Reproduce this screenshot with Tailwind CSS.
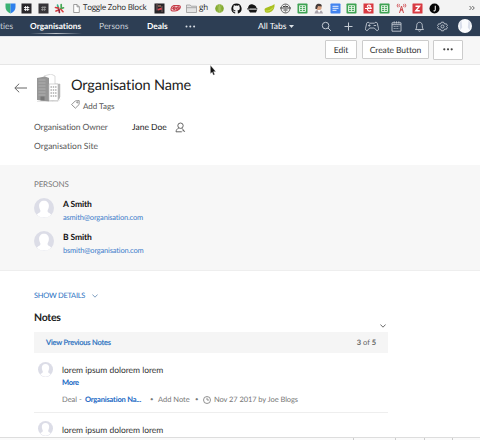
<!DOCTYPE html>
<html lang="en">
<head>
<meta charset="utf-8">
<title>Organisation</title>
<script src="https://cdn.jsdelivr.net/npm/@tailwindcss/browser@4"></script>
</head>
<body class="w-[480px] h-[440px] overflow-hidden bg-white font-['Lato',sans-serif] text-[#333] whitespace-nowrap [text-rendering:geometricPrecision] [font-variant-ligatures:none]">
<svg class="hidden">
  <symbol id="avatar" viewBox="0 0 20 20"><circle cx="10" cy="10" r="10" fill="#dcdde7"/><path d="M10 2.800c3 0 4.900 2.100 4.900 5 0 2-.8 3.700-1.300 4.800-.1 1.400.4 1.900 2.100 2.700l1.400 1.100a9.500 9.500 0 0 1-14.200 0l1.400-1.100c1.700-.8 2.200-1.300 2.100-2.700-.5-1.100-1.300-2.800-1.300-4.800 0-2.900 1.900-5 4.900-5z" fill="#fff"/></symbol>
  <symbol id="sheet" viewBox="0 0 11 11"><rect x=".5" y=".5" width="10" height="10" rx=".8" fill="#3fa354"/><path d="M2.500 2.700h6v5.800h-6zM2.500 4.600h6M2.500 6.600h6M5.500 2.700v5.800" fill="none" stroke="#e8f6e9" stroke-width=".9"/></symbol>
</svg>

<div class="h-4 bg-[#f3f3f3] flex items-center text-[#222] *:shrink-0">
  <svg class="w-[11px] h-[11px] ml-[5px]" viewBox="0 0 11 11"><path d="M.5.5h5v10C2 9 .5 7 .5 4z" fill="#3bb273"/><path d="M5.500.5h5V4c0 3-1.500 5-5 6.500z" fill="#2f80ed"/></svg>
  <svg class="w-[11px] h-[11px] ml-[5px]" viewBox="0 0 11 11"><rect x=".5" y=".5" width="10" height="10" fill="#29272b"/><path d="M4.600 3v5M6.700 3v5M3 4.500h5.300M3 6.600h5.300" stroke="#fff" stroke-width=".9"/></svg>
  <svg class="w-[11px] h-[11px] ml-[5.500px]" viewBox="0 0 11 11"><rect x=".5" y=".5" width="10" height="10" fill="#363438"/><path d="M5 3l-.7 5M7 3l-.7 5M3.200 4.500h5M3 6.600h5" stroke="#999" stroke-width=".8"/></svg>
  <svg class="w-[11px] h-[11px] ml-[5.500px]" viewBox="0 0 11 11" stroke-width="1.700" stroke-linecap="round"><path d="M3.500 2l1 3.200" stroke="#39b58a"/><path d="M7.200 1.500v3M9.500 4.800l-3 1" stroke="#45a854"/><path d="M1.500 4.500l3 .7M2 8l2.600-1" stroke="#d33a3c"/><path d="M5 6.500l.4 3" stroke="#8e2440"/><path d="M7 6.500l2 2.200" stroke="#dc4545"/></svg>
  <svg class="w-[7px] h-[9px] ml-2" viewBox="0 0 7 9" fill="#fff" stroke="#888" stroke-width=".8"><path d="M.7.5H4l2.300 2.300v5.700H.7zM4 .5v2.300h2.300"/></svg>
  <span class="ml-[3px] w-[68px] font-['Open_Sans'] text-[8px] leading-[15px] h-4 tracking-[-0.250px]">Toggle Zoho Block</span>
  <svg class="w-[11px] h-[11px] ml-[3px]" viewBox="0 0 11 11"><rect x=".5" y=".5" width="10" height="10" fill="#282528"/><path d="M3 .5v7M8 3v6" stroke="#786163"/><path d="M3.500 6l4-1.500.5 2-4 1z" fill="#df4550"/><path d="M4 2h3v2H4z" fill="#7a5f50"/></svg>
  <svg class="w-[11px] h-[11px] ml-[5px]" viewBox="0 0 11 11" fill="none" stroke="#c43c48" stroke-width="1.100"><path d="M3.800 2.500h5c2 0 2 2 .5 3.500S6.500 8 5 8H2.500C0 8 .8 3.500 3.800 2.500z" fill="#f4d5d6"/><path d="M2.500 6c1.500-3 3.300-2.500 2.500-.5S3 7 4 4.500M6 6.500c1-3 3.500-3.500 3-1.500s-3 1.500-2-1"/></svg>
  <svg class="w-[11px] h-[9px] ml-[5px]" viewBox="0 0 11 9"><path d="M.5 1h3.700l1 1.200h5.300v6.300H.5zM.5 3.700h10" fill="#e3e3e3" stroke="#999" stroke-width=".8"/></svg>
  <span class="ml-[2px] w-[15px] font-['Open_Sans'] text-[8px] leading-[15px] h-4">gh</span>
  <div class="flex gap-[5.540px]">
    <svg class="w-[11px] h-[11px]" viewBox="0 0 11 11"><circle cx="5.500" cy="5.500" r="4.300" fill="#84aa32"/><path d="M5.500 1.500v8M3.600 2c1 2 1 5 0 7M7.400 2c-1 2-1 5 0 7" stroke="#c5dc82" stroke-width=".5" fill="none"/></svg>
    <svg class="w-[11px] h-[11px]" viewBox="0 0 16 16"><path d="M8 .8a7.400 7.400 0 0 0-2.400 14.400c.4 0 .5-.2.5-.4v-1.500c-2 .4-2.600-.9-2.700-1.300-.2-.4-.5-.8-.9-1-.4-.3.2-.8.7-.3.700.8 1.300 1.800 3 1.300.1-.5.300-.9.500-1.100-1.800-.2-3.500-.9-3.500-3.700 0-.8.300-1.500.8-2 0-.2-.4-1 .1-2 0 0 .6-.2 2 .8a7 7 0 0 1 3.800 0c1.400-1 2-.8 2-.8.5 1 .2 1.800.1 2 .5.5.8 1.200.8 2 0 2.800-1.700 3.500-3.500 3.700.3.300.6.800.6 1.600v2.300c0 .2.100.4.500.4A7.400 7.400 0 0 0 8 .8z" fill="#111"/></svg>
    <svg class="w-[11px] h-[11px]" viewBox="0 0 11 11" fill="#151515"><path d="M1 5C1.500 1.500 4 1 5.800 1.500S9.500 3 9.500 5zM.3 5.300h10v1.200H.3zM1.500 7h8.500l-1 2.500H3z"/><path d="M3 6h6" stroke="#ddd" stroke-width=".6"/></svg>
    <svg class="w-[11px] h-[11px]" viewBox="0 0 11 11" fill="#a9bf1e"><path d="M.5 6C2 4 4 4.500 5.500 3.500S8.500 3 10.500 1c.3 3-.5 6-3 7.500S2 10 1 9z"/><path d="M1.500 8c3 .5 6-1 7.500-3.500" fill="none" stroke="#dbe96d" stroke-width=".7"/></svg>
    <svg class="w-[11px] h-[11px]" viewBox="0 0 11 11"><circle cx="5.500" cy="5.500" r="4.500" fill="#eee" stroke="#686868"/><path d="M0 5h11M3 3.500h5M3.500 7h4" stroke="#454545" stroke-width="1.200"/><path d="M5.500 1v9" stroke="#888" stroke-width=".8"/></svg>
    <svg class="w-[11px] h-[11px]"><use href="#sheet"/></svg>
    <svg class="w-[11px] h-[11px]" viewBox="0 0 11 11"><path d="M1.500 10.500C2 8 3 7 5.500 7s4 1 4.500 3.500z" fill="#a7a2aa"/><circle cx="5.800" cy="4.500" r="2.800" fill="#d9a282"/><path d="M2.500 6C2 2 4 .5 6 .7s3 1 2.800 2.800L5 3 4 6z" fill="#443a37"/><path d="M4.500 7l1.500 3 2-3z" fill="#fff"/></svg>
    <svg class="w-[11px] h-[11px]" viewBox="0 0 11 11"><rect x=".5" y=".5" width="10" height="10" rx=".8" fill="#4384ef"/><path d="M2.500 3.300h6M2.500 5.300h6M2.500 7.300h4" stroke="#fff" stroke-width=".9"/></svg>
    <svg class="w-[11px] h-[11px]"><use href="#sheet"/></svg>
    <svg class="w-[11px] h-[11px]" viewBox="0 0 11 11"><rect x=".5" y=".5" width="10" height="10" fill="#d93a42"/><path d="M8 3.300C6 1.500 4 2 4.500 4M2 5.500h6.300C8.300 3.500 5 3.500 4.500 5.500s1.500 3.300 3.700 2" fill="none" stroke="#fff" stroke-width="1.200"/></svg>
    <svg class="w-[11px] h-[11px]"><use href="#sheet"/></svg>
    <svg class="w-[11px] h-[11px]" viewBox="0 0 11 11" fill="none" stroke="#ce4b4f" stroke-width="1"><path d="M5.500 3L3.500 10M5.500 3l2 7M4.500 6l2.500 2M6.500 6L4 8M3.500 1.200c-.6.800-.6 2 0 2.800M7.500 1.200c.6.800.6 2 0 2.800M2 .8c-1 1.200-1 2.400 0 3.600M9 .8c1 1.200 1 2.400 0 3.600"/></svg>
    <svg class="w-[11px] h-[11px]" viewBox="0 0 11 11"><rect x=".5" y=".5" width="10" height="10" rx=".5" fill="#d83a42"/><path d="M3.500 3.200h4L3.800 7.800h4" fill="none" stroke="#fff" stroke-width="1.400"/></svg>
    <svg class="w-[11px] h-[11px]" viewBox="0 0 11 11"><circle cx="5.500" cy="5.500" r="5" fill="#050505"/><path d="M6.300 2.700v3.800c0 1.200-.8 1.500-1.800 1.300" fill="none" stroke="#eee" stroke-width="1.100"/></svg>
  </div>
  <svg class="w-[6px] h-[6px] ml-[29px]" viewBox="0 0 6 6" fill="none" stroke="#555" stroke-width=".9"><path d="M.5 1l2 2-2 2M3.300 1l2 2-2 2"/></svg>
</div>

<nav class="h-5 bg-[#2d3e54] text-[#c8ced7] flex items-center text-[8.500px] leading-5 *:shrink-0">
  <span class="w-[30px]">ties</span>
  <span class="w-[69px] h-5 text-white font-bold text-[8.300px] bg-[linear-gradient(90deg,#fff0,#ffffffb0,#fff0)] bg-[length:52px_1px] bg-no-repeat bg-[position:0_17px]">Organisations</span>
  <span class="w-[48px]">Persons</span>
  <span class="w-[38px] text-white font-bold text-[8.300px]">Deals</span>
  <svg class="w-[11px] h-[3px]" viewBox="0 0 11 3" fill="#dbe0e7"><circle cx="1.500" cy="1.500" r="1"/><circle cx="5.300" cy="1.500" r="1"/><circle cx="9.100" cy="1.500" r="1"/></svg>
  <span class="ml-[62px] w-[31px] text-white">All Tabs</span>
  <svg class="w-[5px] h-[3px]" viewBox="0 0 5 3" fill="#dce1e7"><path d="M0 0h5L2.500 3z"/></svg>
  <svg class="w-[11px] h-[11px] ml-[27px]" viewBox="0 0 11 11" fill="none" stroke="#c4cbd4" stroke-width="1"><circle cx="4.600" cy="4.600" r="3.300"/><path d="M7 7l3 3"/></svg>
  <svg class="w-[9px] h-[9px] ml-[12px]" viewBox="0 0 9 9" stroke="#c4cbd4"><path d="M4.500.5v8M.5 4.500h8"/></svg>
  <svg class="w-[14px] h-[11px] ml-[12px]" viewBox="0 0 14 11" fill="none" stroke="#c4cbd4" stroke-width=".9"><path d="M4.500 2.200h5C9.800 1 12 1 12.300 2.200l1.200 5.500c.2 2-1.500 2.400-2.500 1.200L9.300 7H4.700L3 8.900C2 10.100.3 9.700.5 7.700l1.200-5.500C2 1 4.200 1 4.500 2.200z"/><path d="M4.300 3.300v2.400M3.100 4.500h2.400M8.700 4.500h2.400"/></svg>
  <svg class="w-[11px] h-[11px] ml-[12px]" viewBox="0 0 11 11" fill="none" stroke="#c4cbd4" stroke-width=".9"><path d="M1 1.800h9v8.400H1zM1 3.700h9M3.200.4v2M5.500.4v2M7.800.4v2"/><path d="M2.700 5.500h5.600M2.700 7.500h5.600" stroke-dasharray="1 .8"/></svg>
  <svg class="w-[11px] h-[11px] ml-[12px]" viewBox="0 0 11 11" fill="none" stroke="#c4cbd4" stroke-width=".9"><path d="M1.500 8.500c1-1 1.200-1.700 1.200-3.800C2.700 2.600 3.800 1.300 5.500 1.300s2.800 1.300 2.800 3.400c0 2.100.2 2.800 1.200 3.800zM4.300 9.500c.3 1 2.100 1 2.400 0"/></svg>
  <svg class="w-[11px] h-[11px] ml-[12px]" viewBox="0 0 11 11" fill="none" stroke="#c4cbd4" stroke-width=".9"><path d="M4.400 1.200h2.200l.4 1.200 1.100.6 1.200-.3 1.100 1.900-.9.900 0 0 .9.900-1.100 1.900-1.200-.3-1.100.6-.4 1.200H4.400L4 8.600 2.900 8l-1.200.3L.6 6.400l.9-.9-.9-.9 1.100-1.900 1.200.3L4 2.400z"/><circle cx="5.500" cy="5.500" r="1.500"/></svg>
  <svg class="w-[14px] h-[14px] ml-[10px]" viewBox="0 0 20 20"><circle cx="10" cy="10" r="10" fill="#fafbfd"/><path d="M2 5l3-3 1 10-3 4zM18 5l-3-3-1 10 3 4z" fill="#d9deea"/></svg>
</nav>

<div class="h-[29px] bg-[#f7f7f7] border-b border-[#e6e6e6] border-t border-t-[#dfe2e8] flex justify-end gap-[5px] pr-[17px] pt-[3px] text-[8.500px] leading-[18px] text-[#333]">
  <span class="w-8 h-[19px] border border-[#ccc] rounded-[1px] bg-white text-center">Edit</span>
  <span class="w-[67px] h-[19px] border border-[#ccc] rounded-[1px] bg-white text-center tracking-[-0.100px]">Create Button</span>
  <span class="w-[30px] h-5 -ml-px border border-[#ccc] rounded-[1px] bg-white flex items-center justify-center pb-px"><svg class="w-[10px] h-[3px]" viewBox="0 0 10 3" fill="#444"><circle cx="1.300" cy="1.300" r="1.100"/><circle cx="5" cy="1.300" r="1.100"/><circle cx="8.700" cy="1.300" r="1.100"/></svg></span>
</div>

<header class="h-[100px] relative">
  <svg class="absolute left-[210px] top-0 w-[6px] h-[11px]" viewBox="0 0 6 11"><path d="M.5.5v8l1.700-1.500 1.200 3 1.200-.6-1.200-2.800h2.200z" fill="#111" stroke="#aaa" stroke-width=".3"/></svg>
  <div class="flex pt-[9px] h-[54px]">
    <svg class="w-[13px] h-[10px] ml-[14px] mt-[9px]" viewBox="0 0 13 10" fill="none" stroke="#666" stroke-width="1"><path d="M13 5H1M5.200.7L.8 5l4.400 4.300"/></svg>
    <svg class="w-6 h-7 ml-[10px]" viewBox="0 0 24 28"><path d="M7 2l7-2 4 2v8h5v13l-8 4z" fill="#fff" stroke="#ccc" stroke-width=".7"/><path d="M0 4l8-1.500L12 4v23.500L0 26z" fill="#969696"/><path d="M1.500 6h7M1.500 9h7M1.500 12h7M1.500 15h7M1.500 18h7M1.500 21h7" stroke="#b8b8b8" stroke-width=".8"/><path d="M3.500 22.500h4v4h-4z" fill="#777"/><path d="M12 10h9v16.500h-9z" fill="#fff" stroke="#bbb" stroke-width=".6"/><path d="M21 10h2v14l-2 2.500z" fill="#b5b5b5"/><path d="M13.500 13h6M13.500 16h6M13.500 19h6M13.500 22h6" stroke="#aaa" stroke-width="1.300" stroke-dasharray="1.400 .9"/><path d="M0 27.500h21l2-2" stroke="#ccc" fill="none" stroke-width=".5"/></svg>
    <div class="ml-[10px]">
      <h1 class="text-[14.500px] leading-[23px] h-[21px] text-[#222] tracking-[-0.150px]">Organisation Name</h1>
      <div class="flex items-center h-[19px] mt-px text-[8px] text-[#555]">
        <svg class="w-[9px] h-[9px] mr-[3px] -mt-[2px]" viewBox="0 0 9 9" fill="none" stroke="#777" stroke-width=".8"><path d="M.6 4.600L4.300.9l3.900-.3-.1 3.900-3.700 3.700z"/><circle cx="6.300" cy="2.400" r=".6"/></svg>
        <span>Add Tags</span>
      </div>
    </div>
  </div>
  <div class="flex items-center pl-[34px] h-[16px] text-[8.500px] text-[#555]">
    <span class="w-[98px] tracking-[-0.100px]">Organisation Owner</span>
    <span class="w-[43px] text-[#222]">Jane Doe</span>
    <svg class="w-[11px] h-[11px]" viewBox="0 0 11 11" fill="none" stroke="#555" stroke-width=".9"><circle cx="5.500" cy="3.700" r="2.700"/><path d="M3.800 6C2 6.800 1.200 8 1 9.800h5.800M7 6.300l2.800 3.500"/><path d="M7.500 8.800h1.500"/></svg>
  </div>
  <div class="mt-[3px] pl-[34px] h-[15px] leading-[16px] text-[8.500px] text-[#555]">Organisation Site</div>
</header>

<section class="h-[106px] bg-[#f7f7f7] border-b border-[#eee] pl-[34px] pt-[12px]">
  <h2 class="text-[8px] leading-[15px] text-[#777] tracking-[-0.150px]">PERSONS</h2>
  <div class="flex gap-[9px] mt-[4px] h-[33px]">
    <svg class="w-5 h-5 mt-[2px]"><use href="#avatar"/></svg>
    <div><div class="font-bold text-[8.500px] leading-4 text-[#111] tracking-[-0.100px]">A Smith</div><div class="text-[7.500px] leading-[11px] text-[#3f7ecb] tracking-[-0.180px]">asmith@organisation.com</div></div>
  </div>
  <div class="flex gap-[9px] h-[33px]">
    <svg class="w-5 h-5 mt-[2px]"><use href="#avatar"/></svg>
    <div><div class="font-bold text-[8.500px] leading-4 text-[#111] tracking-[-0.100px]">B Smith</div><div class="text-[7.500px] leading-[11px] text-[#3f7ecb] tracking-[-0.180px]">bsmith@organisation.com</div></div>
  </div>
</section>

<main class="pl-[34px] h-[166px] overflow-hidden">
  <div class="pt-[17px] flex items-center h-8 text-[7.500px] leading-[15px] text-[#2870bf]"><span class="w-[58px] tracking-[-0.270px]">SHOW DETAILS</span><svg class="w-[6px] h-1" viewBox="0 0 6 4" fill="none" stroke="#5f86b0" stroke-width=".8"><path d="M.4.5L3 3.200 5.600.5"/></svg></div>
  <div class="h-[29px] w-[354px] flex">
    <h2 class="font-bold text-[10.500px] leading-[31px] text-[#222] grow tracking-[-0.250px]">Notes</h2>
    <svg class="w-[6px] h-1 mt-[21px] mr-[2px]" viewBox="0 0 6 4" fill="none" stroke="#444" stroke-width=".8"><path d="M.4.5L3 3.200 5.600.5"/></svg>
  </div>
  <div class="w-[354px] h-[21px] bg-[#f5f5f5] flex justify-between items-center px-3 text-[7.500px] leading-[21px]"><span class="text-[#2870bf] tracking-[-0.180px] [-webkit-text-stroke:0.200px]">View Previous Notes</span><span class="text-[#666]"><b>3</b> of <b>5</b></span></div>
  <article class="w-[354px] h-[60px] border-b border-[#eee] flex pt-[8px] pl-1">
    <svg class="w-[15px] h-[15px] mt-[1px]"><use href="#avatar"/></svg>
    <div class="ml-[9px]">
      <p class="text-[8.500px] leading-[18px] text-[#333] tracking-[-0.030px]">lorem ipsum dolorem lorem</p>
      <div class="text-[7.500px] leading-[8px] text-[#1768c4] font-bold tracking-[-0.300px]">More</div>
      <div class="flex items-center mt-[5px] h-[15px] text-[7.500px] text-[#777]"><span class="w-[23px]">Deal -</span><span class="w-[65px] text-[#1768c4] font-bold tracking-[-0.200px]">Organisation Na...</span><span class="w-[8px] text-[6px]">•</span><span class="w-[37px]">Add Note</span><span class="w-[8px] text-[6px]">•</span><svg class="w-2 h-2 mr-[3px]" viewBox="0 0 8 8" fill="none" stroke="#777" stroke-width=".8"><circle cx="4" cy="4" r="3.500"/><path d="M4 1.800V4h2"/></svg><span class="tracking-[-0.080px]">Nov 27 2017 by Joe Blogs</span></div>
    </div>
  </article>
  <article class="h-[24px] overflow-hidden flex pt-[8px] pl-1">
    <svg class="w-[15px] h-[15px] shrink-0"><use href="#avatar"/></svg>
    <p class="ml-[9px] text-[8.500px] leading-[18px] text-[#333] tracking-[-0.030px]">lorem ipsum dolorem lorem</p>
  </article>
</main>
<footer class="h-[3px] bg-[#fafafa] border-t border-[#ddd] flex"><i class="w-[354px] border-r border-[#ccc]"></i><i class="w-[42px] border-r border-[#ccc]"></i><i class="w-[29px] border-r border-[#ccc]"></i><i class="w-[28px] border-r border-[#ccc]"></i></footer>
</body>
</html>
